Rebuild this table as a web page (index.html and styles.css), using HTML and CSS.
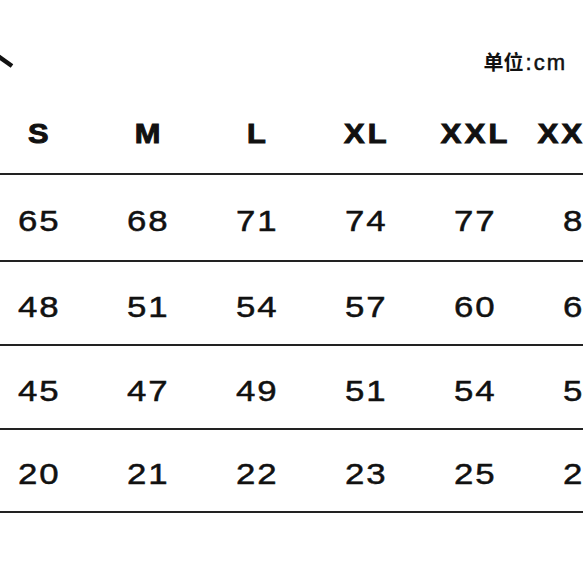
FILE: index.html
```html
<!DOCTYPE html>
<html lang="zh">
<head>
<meta charset="utf-8">
<link rel="stylesheet" href="styles.css">
</head>
<body>
<div class="page">
  <div class="top">
    <svg class="stroke" width="16" height="20" viewBox="0 0 16 20"><path d="M-2 6 L12 16" stroke="#111" stroke-width="4.4" fill="none"/></svg>
    <div class="unit"><span class="cn">单位</span><span class="lat">:cm</span></div>
  </div>
  <div class="table">
    <div class="row head">
      <div class="cell"><span>S</span></div>
      <div class="cell"><span>M</span></div>
      <div class="cell"><span>L</span></div>
      <div class="cell"><span>XL</span></div>
      <div class="cell"><span>XXL</span></div>
      <div class="cell"><span>XXXL</span></div>
    </div>
    <div class="row data r1">
      <div class="cell"><span>65</span></div>
      <div class="cell"><span>68</span></div>
      <div class="cell"><span>71</span></div>
      <div class="cell"><span>74</span></div>
      <div class="cell"><span>77</span></div>
      <div class="cell"><span>80</span></div>
    </div>
    <div class="row data r2">
      <div class="cell"><span>48</span></div>
      <div class="cell"><span>51</span></div>
      <div class="cell"><span>54</span></div>
      <div class="cell"><span>57</span></div>
      <div class="cell"><span>60</span></div>
      <div class="cell"><span>63</span></div>
    </div>
    <div class="row data r3">
      <div class="cell"><span>45</span></div>
      <div class="cell"><span>47</span></div>
      <div class="cell"><span>49</span></div>
      <div class="cell"><span>51</span></div>
      <div class="cell"><span>54</span></div>
      <div class="cell"><span>57</span></div>
    </div>
    <div class="row data r4">
      <div class="cell"><span>20</span></div>
      <div class="cell"><span>21</span></div>
      <div class="cell"><span>22</span></div>
      <div class="cell"><span>23</span></div>
      <div class="cell"><span>25</span></div>
      <div class="cell"><span>27</span></div>
    </div>
  </div>
</div>
</body>
</html>
```
FILE: styles.css
```css
html, body {
  margin: 0;
  padding: 0;
  background: #fff;
}
body {
  width: 583px;
  height: 583px;
  overflow: hidden;
}
.page {
  width: 583px;
  height: 583px;
  overflow: hidden;
  position: relative;
  color: #111;
}
.top {
  height: 104px;
  display: flex;
  justify-content: space-between;
  align-items: flex-start;
}
.stroke {
  display: block;
  margin-top: 50px;
}
.unit {
  margin-top: 50px;
  margin-right: 18px;
  display: flex;
  align-items: baseline;
  line-height: 24px;
}
.unit .cn {
  font-family: "Noto Sans CJK SC", sans-serif;
  font-weight: 700;
  font-size: 20px;
}
.unit .lat {
  font-family: "Liberation Sans", Arial, sans-serif;
  font-weight: 400;
  font-size: 22px;
  letter-spacing: 2px;
  padding-left: 2px;
  margin-right: -2px;
  -webkit-text-stroke: 0.5px #111;
}
.table {
  margin-left: -16px;
  width: 654px;
}
.row {
  display: grid;
  grid-template-columns: repeat(6, 109px);
}
.cell {
  display: flex;
  align-items: center;
  justify-content: center;
}
.head {
  height: 59px;
  padding-bottom: 10px;
}
.head .cell span {
  display: inline-block;
  font-family: "Liberation Sans", Arial, sans-serif;
  font-weight: 700;
  font-size: 28px;
  line-height: 28px;
  letter-spacing: 3px;
  margin-right: -3px;
  transform: scaleX(1.1);
  -webkit-text-stroke: 1px #111;
}
.data {
  border-top: 2px solid #222;
  box-sizing: border-box;
  padding-top: 7px;
}
.data .cell span {
  display: inline-block;
  font-family: "Liberation Sans", Arial, sans-serif;
  font-weight: 400;
  font-size: 30px;
  line-height: 30px;
  letter-spacing: 1.5px;
  margin-right: -1.5px;
  transform: scaleX(1.16);
  -webkit-text-stroke: 0.5px #111;
}
.r1 { height: 87px; }
.r2 { height: 84px; }
.r3 { height: 84px; }
.r4 {
  height: 85px;
  border-bottom: 2px solid #222;
}
```
